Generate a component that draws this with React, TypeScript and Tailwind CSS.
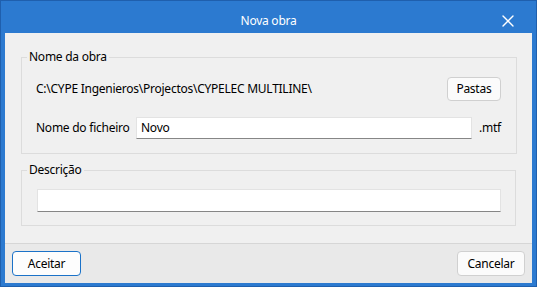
import { X } from "lucide-react";

const font = { fontFamily: '"Noto Sans", "Open Sans", sans-serif' };

export default function App() {
  return (
    <div
      className="flex h-[287px] w-[537px] flex-col border border-[#1f5fad] bg-[#2c7ad0] text-[12px] tracking-[-0.25px] text-[#000]"
      style={font}
    >
      {/* title bar */}
      <div className="relative flex h-[32px] shrink-0 items-start justify-center pt-[12px] text-white">
        <span className="leading-[16px]">Nova obra</span>
        <X
          className="absolute right-[18px] top-[10px] h-[20px] w-[20px]"
          strokeWidth={1.6}
        />
      </div>

      {/* client area */}
      <div className="mx-[4px] mb-[3px] flex flex-1 flex-col bg-[#f0f0f0]">
        <div className="flex flex-1 flex-col gap-[8px] px-[16px] pt-[16px]">
          <fieldset className="border border-[#dcdcdc]">
            <legend className="ml-[5px] px-[2px] leading-[16px]">Nome da obra</legend>
            <div className="flex flex-col gap-[16px] pb-[14px] pl-[14px] pr-[15px] pt-[12px]">
              <div className="flex h-[24px] items-center justify-between">
                <span>C:\CYPE Ingenieros\Projectos\CYPELEC MULTILINE\</span>
                <button className="h-[24px] w-[54px] rounded-[4px] border border-[#d0d0d0] bg-[#fbfbfb]">
                  Pastas
                </button>
              </div>
              <div className="flex h-[22px] items-center">
                <span className="w-[100px]">Nome do ficheiro</span>
                <div className="flex h-[22px] w-[336px] items-center border border-[#e3e3e3] border-b-[#868686] bg-white pl-[4px]">
                  Novo
                </div>
                <span className="ml-[7px]">.mtf</span>
              </div>
            </div>
          </fieldset>

          <fieldset className="border border-[#dcdcdc]">
            <legend className="ml-[5px] px-[2px] leading-[16px]">Descrição</legend>
            <div className="pb-[13px] pl-[15px] pr-[14px] pt-[11px]">
              <div className="h-[23px] border border-[#e3e3e3] border-b-[#868686] bg-white" />
            </div>
          </fieldset>
        </div>

        {/* footer */}
        <div className="flex h-[40px] shrink-0 items-start justify-between border-t border-[#d6d6d6] bg-[#e9e9e9] px-[7px] pt-[7px]">
          <button className="h-[25px] w-[69px] rounded-[4px] border border-[#1b72c8] bg-[#fdfdfd]">
            Aceitar
          </button>
          <button className="h-[25px] w-[68px] rounded-[4px] border border-[#d0d0d0] bg-[#fbfbfb]">
            Cancelar
          </button>
        </div>
      </div>
    </div>
  );
}
